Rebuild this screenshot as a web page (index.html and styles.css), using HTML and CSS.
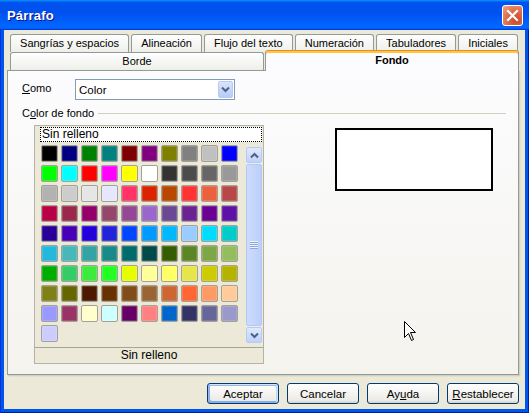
FILE: index.html
```html
<!DOCTYPE html>
<html lang="es">
<head>
<meta charset="UTF-8">
<title>Párrafo</title>
<link rel="stylesheet" href="styles.css">
</head>
<body>
<div class="window">
    <div class="titlebar">
        <span class="title">Párrafo</span>
        <span class="close">
            <svg width="13" height="13" viewBox="0 0 13 13"><path d="M2 2 L11 11 M11 2 L2 11" stroke="#fff" stroke-width="2.2" stroke-linecap="square"/></svg>
        </span>
    </div>
    <div class="client">
        <div class="tabs">
            <div class="tab-row back">
                <div class="tab">Sangrías y espacios</div>
                <div class="tab">Alineación</div>
                <div class="tab">Flujo del texto</div>
                <div class="tab">Numeración</div>
                <div class="tab">Tabuladores</div>
                <div class="tab">Iniciales</div>
            </div>
            <div class="tab-row front">
                <div class="tab">Borde</div>
                <div class="tab selected">Fondo</div>
            </div>
        </div>
        <div class="panel">
            <div class="field-row">
                <span class="field-label"><u>C</u>omo</span>
                <div class="combo">
                    <span class="combo-text">Color</span>
                    <span class="combo-btn">
                        <svg width="9" height="7" viewBox="0 0 9 7"><polyline points="1,1.5 4.5,5 8,1.5" fill="none" stroke="#4d6185" stroke-width="2"/></svg>
                    </span>
                </div>
            </div>
            <div class="group-title"><span>C<u>o</u>lor de fondo</span></div>
            <div class="group-body">
                <div class="color-box">
                    <div class="none-item">Sin relleno</div>
                    <div class="color-area">
                        <div class="swatches">
                            <span class="swatch" style="background:#000000"></span>
                            <span class="swatch" style="background:#000080"></span>
                            <span class="swatch" style="background:#008000"></span>
                            <span class="swatch" style="background:#008080"></span>
                            <span class="swatch" style="background:#800000"></span>
                            <span class="swatch" style="background:#800080"></span>
                            <span class="swatch" style="background:#808000"></span>
                            <span class="swatch" style="background:#808080"></span>
                            <span class="swatch" style="background:#c0c0c0"></span>
                            <span class="swatch" style="background:#0000ff"></span>

                            <span class="swatch" style="background:#00ff00"></span>
                            <span class="swatch" style="background:#00ffff"></span>
                            <span class="swatch" style="background:#ff0000"></span>
                            <span class="swatch" style="background:#ff00ff"></span>
                            <span class="swatch" style="background:#ffff00"></span>
                            <span class="swatch" style="background:#ffffff"></span>
                            <span class="swatch" style="background:#333333"></span>
                            <span class="swatch" style="background:#4c4c4c"></span>
                            <span class="swatch" style="background:#666666"></span>
                            <span class="swatch" style="background:#999999"></span>

                            <span class="swatch" style="background:#b2b2b2"></span>
                            <span class="swatch" style="background:#cccccc"></span>
                            <span class="swatch" style="background:#e6e6e6"></span>
                            <span class="swatch" style="background:#e6e6ff"></span>
                            <span class="swatch" style="background:#ff3366"></span>
                            <span class="swatch" style="background:#dc2300"></span>
                            <span class="swatch" style="background:#b84700"></span>
                            <span class="swatch" style="background:#ff3333"></span>
                            <span class="swatch" style="background:#eb613d"></span>
                            <span class="swatch" style="background:#b84747"></span>

                            <span class="swatch" style="background:#b80047"></span>
                            <span class="swatch" style="background:#99284c"></span>
                            <span class="swatch" style="background:#94006b"></span>
                            <span class="swatch" style="background:#94476b"></span>
                            <span class="swatch" style="background:#944794"></span>
                            <span class="swatch" style="background:#9966cc"></span>
                            <span class="swatch" style="background:#6b4794"></span>
                            <span class="swatch" style="background:#6b2394"></span>
                            <span class="swatch" style="background:#6b0094"></span>
                            <span class="swatch" style="background:#5e11a6"></span>

                            <span class="swatch" style="background:#280099"></span>
                            <span class="swatch" style="background:#4700b8"></span>
                            <span class="swatch" style="background:#2300dc"></span>
                            <span class="swatch" style="background:#2323dc"></span>
                            <span class="swatch" style="background:#0047ff"></span>
                            <span class="swatch" style="background:#0099ff"></span>
                            <span class="swatch" style="background:#00b8ff"></span>
                            <span class="swatch" style="background:#99ccff"></span>
                            <span class="swatch" style="background:#00dcff"></span>
                            <span class="swatch" style="background:#00cccc"></span>

                            <span class="swatch" style="background:#23b8dc"></span>
                            <span class="swatch" style="background:#47b8b8"></span>
                            <span class="swatch" style="background:#33a3a3"></span>
                            <span class="swatch" style="background:#198a8a"></span>
                            <span class="swatch" style="background:#006b6b"></span>
                            <span class="swatch" style="background:#004a4a"></span>
                            <span class="swatch" style="background:#355e00"></span>
                            <span class="swatch" style="background:#5c8526"></span>
                            <span class="swatch" style="background:#7da647"></span>
                            <span class="swatch" style="background:#94bd5e"></span>

                            <span class="swatch" style="background:#00ae00"></span>
                            <span class="swatch" style="background:#33cc66"></span>
                            <span class="swatch" style="background:#3deb3d"></span>
                            <span class="swatch" style="background:#23ff23"></span>
                            <span class="swatch" style="background:#e6ff00"></span>
                            <span class="swatch" style="background:#ffff99"></span>
                            <span class="swatch" style="background:#ffff66"></span>
                            <span class="swatch" style="background:#e6e64c"></span>
                            <span class="swatch" style="background:#cccc00"></span>
                            <span class="swatch" style="background:#b3b300"></span>

                            <span class="swatch" style="background:#808019"></span>
                            <span class="swatch" style="background:#666600"></span>
                            <span class="swatch" style="background:#4c1900"></span>
                            <span class="swatch" style="background:#663300"></span>
                            <span class="swatch" style="background:#804c19"></span>
                            <span class="swatch" style="background:#996633"></span>
                            <span class="swatch" style="background:#cc6633"></span>
                            <span class="swatch" style="background:#ff6633"></span>
                            <span class="swatch" style="background:#ff9966"></span>
                            <span class="swatch" style="background:#ffcc99"></span>

                            <span class="swatch" style="background:#9999ff"></span>
                            <span class="swatch" style="background:#993366"></span>
                            <span class="swatch" style="background:#ffffcc"></span>
                            <span class="swatch" style="background:#ccffff"></span>
                            <span class="swatch" style="background:#660066"></span>
                            <span class="swatch" style="background:#ff8080"></span>
                            <span class="swatch" style="background:#0066cc"></span>
                            <span class="swatch" style="background:#333366"></span>
                            <span class="swatch" style="background:#666699"></span>
                            <span class="swatch" style="background:#9999cc"></span>

                            <span class="swatch" style="background:#ccccff"></span>
                        </div>
                        <div class="scrollbar">
                            <span class="sb-btn">
                                <svg width="9" height="7" viewBox="0 0 9 7"><polyline points="1,5.5 4.5,2 8,5.5" fill="none" stroke="#4d6185" stroke-width="2"/></svg>
                            </span>
                            <span class="sb-thumb"><span class="grip"></span></span>
                            <span class="sb-btn">
                                <svg width="9" height="7" viewBox="0 0 9 7"><polyline points="1,1.5 4.5,5 8,1.5" fill="none" stroke="#4d6185" stroke-width="2"/></svg>
                            </span>
                        </div>
                    </div>
                    <div class="color-name">Sin relleno</div>
                </div>
                <div class="preview"></div>
            </div>
        </div>
        <div class="buttons">
            <button class="btn default">Aceptar</button>
            <button class="btn">Cancelar</button>
            <button class="btn">Ay<u>u</u>da</button>
            <button class="btn"><u>R</u>establecer</button>
        </div>
    </div>
    <!-- mouse pointer captured in the screenshot -->
    <svg class="cursor" width="13" height="21" viewBox="0 0 13 21"><path d="M0.5 0.5 L0.5 16.5 L4.5 12.5 L7.5 19.5 L9.5 18.5 L6.5 11.5 L11.5 11.5 Z" fill="#fff" stroke="#000" stroke-width="1"/></svg>
</div>
</body>
</html>
```

FILE: styles.css
```css
/* Windows XP style "Párrafo" dialog */
* {
    box-sizing: border-box;
}
body {
    margin: 0;
    font-family: "Liberation Sans", Arial, sans-serif;
    font-size: 11px;
    color: #000;
    background: #0054e3;
}
u {
    text-decoration: underline;
}
.window {
    position: relative;
    width: 529px;
    height: 413px;
    display: flex;
    flex-direction: column;
    background: #0055ea;
    box-shadow: inset 1px 0 #0831d9, inset -1px 0 #001ea0, inset 0 -1px #001ea0;
}
.titlebar {
    height: 30px;
    display: flex;
    align-items: center;
    justify-content: space-between;
    padding: 0 6px 0 7px;
    background: linear-gradient(180deg, #0997ff, #0053ee 8%, #0050ee 40%, #0066ff 88%, #0066ff 93%, #005bff 95%, #003dd7 96%, #003dd7);
}
.title {
    color: #fff;
    font-weight: bold;
    font-size: 13px;
    letter-spacing: 0.2px;
    text-shadow: 1px 1px #0f1089;
    margin-top: 1px;
}
.close {
    width: 21px;
    height: 21px;
    display: flex;
    align-items: center;
    justify-content: center;
    border: 1px solid #fff;
    border-radius: 3px;
    background: radial-gradient(circle at 70% 75%, #cc4625 0, #e0734f 55%, #f0a58a 100%);
    margin-top: 1px;
}
.client {
    flex: 1;
    margin: 0 4px 4px 4px;
    padding: 4px 6px 0 3px;
    background: #ece9d8;
    display: flex;
    flex-direction: column;
}

/* tabs */
.tabs {
    padding-left: 3px;
}
.tab-row {
    display: flex;
    gap: 2px;
    height: 18px;
}
.tab-row.back {
    padding-right: 1px;
}
.tab-row.front {
    gap: 1px;
    position: relative;
    z-index: 1;
}
.tab {
    flex: 1 1 auto;
    padding: 0 8px;
    height: 18px;
    line-height: 17px;
    text-align: center;
    white-space: nowrap;
    border: 1px solid #919b9c;
    border-bottom: none;
    border-radius: 3px 3px 0 0;
    background: linear-gradient(180deg, #fff, #fafaf9 26%, #f0f0ea 95%, #ecebe6);
}
.tab-row.front .tab {
    flex: 1 1 0;
}
.tab.selected {
    height: 21px;
    margin-top: -2px;
    line-height: 18px;
    font-weight: bold;
    background: #fcfcfe;
    border-top: 1px solid #e68b2c;
    box-shadow: inset 0 2px #ffc73c;
}

/* tab page */
.panel {
    height: 305px;
    padding: 8px 12px 0 14px;
    border: 1px solid #919b9c;
    background: linear-gradient(180deg, #fcfcfe, #f4f3ee);
    box-shadow: 1px 1px #d0d0bf, 2px 2px #e2dfcf;
}
.field-row {
    display: flex;
    align-items: center;
}
.field-label {
    width: 53px;
    margin-top: -3px;
}
.combo {
    width: 160px;
    height: 21px;
    display: flex;
    align-items: center;
    justify-content: space-between;
    padding: 1px;
    border: 1px solid #7f9db9;
    background: #fff;
}
.combo-text {
    padding-left: 2px;
    font-size: 11.5px;
}
.combo-btn {
    width: 15px;
    height: 17px;
    display: flex;
    align-items: center;
    justify-content: center;
    border: 1px solid #b9cbf3;
    border-radius: 2px;
    background: linear-gradient(180deg, #d8e4fd, #b7cbf7);
}
.group-title {
    margin-top: 7px;
    height: 13px;
    line-height: 13px;
    display: flex;
    align-items: center;
    gap: 4px;
}
.group-title::after {
    content: "";
    flex: 1;
    height: 1px;
    background: #d0d0bf;
}
.group-body {
    display: flex;
    align-items: flex-start;
    margin-top: 5px;
    padding-left: 12px;
}

/* colour list */
.color-box {
    width: 230px;
    border: 1px solid #b5b3a7;
    background: #ece9d8;
}
.none-item {
    height: 15px;
    line-height: 13px;
    margin: 1px 1px 0 5px;
    padding-left: 1px;
    border: 1px dotted #000;
    background: #fff;
    font-size: 12px;
}
.color-area {
    display: flex;
    justify-content: space-between;
    margin: 3px 1px 0 6px;
}
.swatches {
    display: grid;
    grid-template-columns: repeat(10, 17px);
    grid-auto-rows: 17px;
    gap: 3px;
}
.swatch {
    border: 1px solid #a3a196;
    border-radius: 2px;
    box-shadow: inset 0 0 0 1px rgba(255, 255, 255, 0.15);
}
.scrollbar {
    width: 16px;
    height: 196px;
    margin-top: 2px;
    display: flex;
    flex-direction: column;
    background: #eeede5;
}
.sb-btn {
    height: 16px;
    display: flex;
    align-items: center;
    justify-content: center;
    border: 1px solid #b6caf6;
    border-radius: 2px;
    background: linear-gradient(180deg, #e0e9fd, #bfd1fa);
}
.sb-thumb {
    flex: 1;
    margin: 1px 0;
    display: flex;
    align-items: center;
    justify-content: center;
    border: 1px solid #b3c8f5;
    border-radius: 2px;
    background: linear-gradient(90deg, #cddbfd, #bccffa);
}
.grip {
    width: 8px;
    height: 8px;
    background: repeating-linear-gradient(180deg, #eef3fe 0 1px, #8fa7e0 1px 2px);
}
.color-name {
    margin-top: 4px;
    height: 16px;
    line-height: 15px;
    text-align: center;
    border-top: 1px solid #a7a59a;
    font-size: 12px;
}
.preview {
    width: 158px;
    height: 63px;
    margin: 3px 0 0 71px;
    border: 2px solid #000;
    background: #fff;
}

/* dialog buttons */
.buttons {
    display: flex;
    justify-content: flex-end;
    gap: 8px;
    margin-top: 8px;
}
.btn {
    width: 72px;
    height: 21px;
    padding: 0;
    font-family: inherit;
    font-size: 11.5px;
    color: #000;
    border: 1px solid #003c74;
    border-radius: 3px;
    background: linear-gradient(180deg, #fff, #ecebe6 86%, #d6d0c5);
}
.btn.default {
    box-shadow: inset -1px 1px #cee7ff, inset 1px 2px #98b8ea, inset -2px 2px #bcd4f6, inset 1px -1px #89ade4, inset 2px -2px #89ade4;
}
.cursor {
    position: absolute;
    left: 404px;
    top: 321px;
}
```
